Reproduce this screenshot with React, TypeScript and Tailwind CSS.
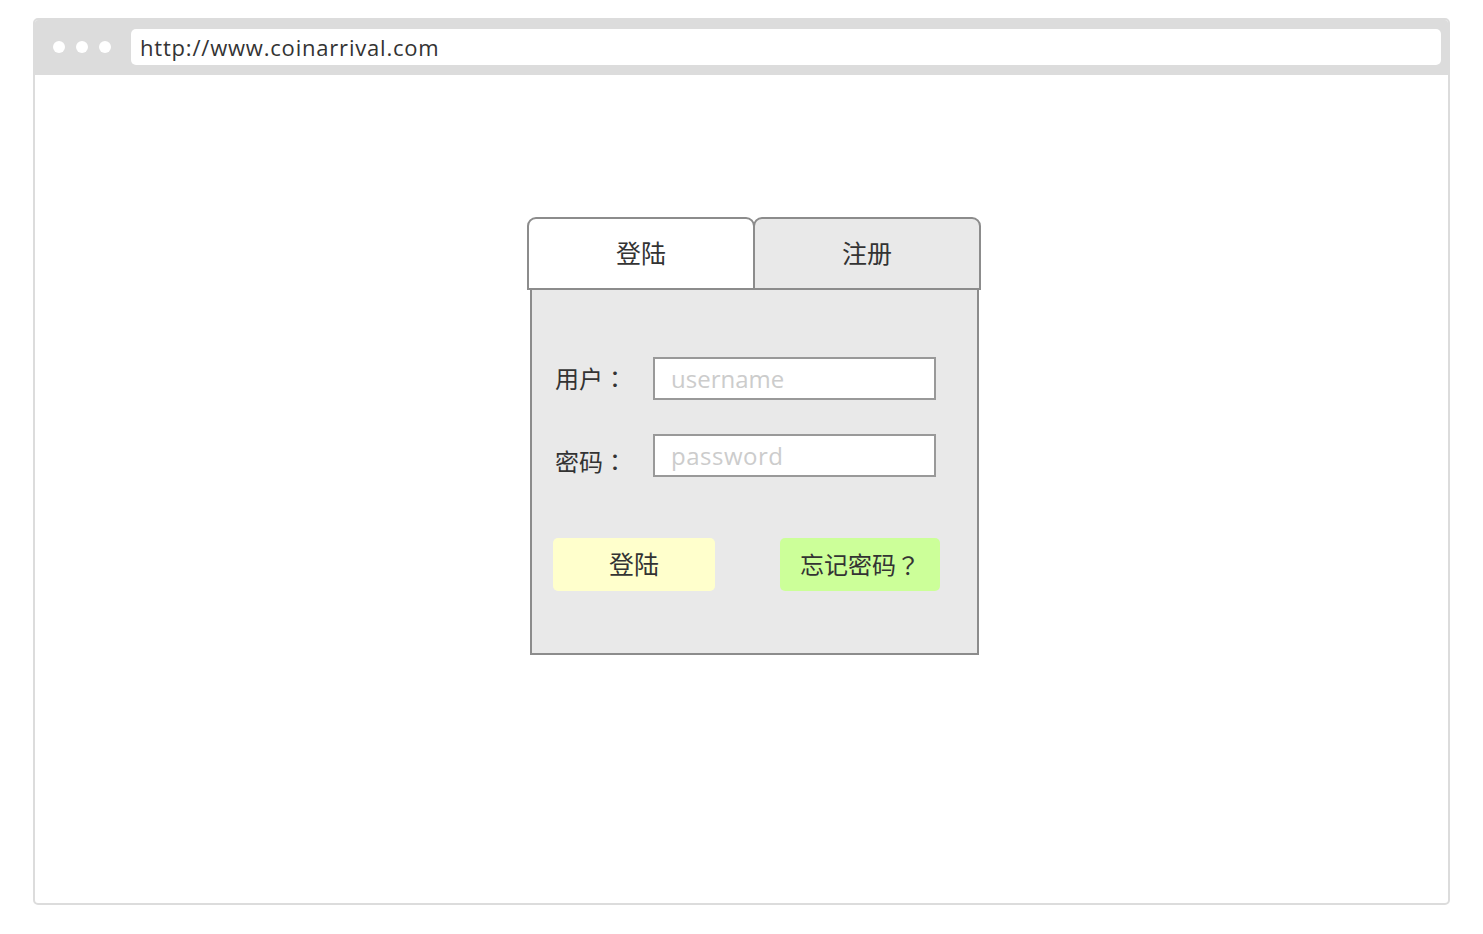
import React from 'react'

const font = { fontFamily: '"Open Sans", "Noto Sans CJK SC", sans-serif' }
const punct = { fontFamily: '"Noto Sans CJK TC", sans-serif' }

export default function App() {
  return (
    <div className="min-h-screen bg-white px-[33px] pt-[18px]" style={font}>
      <div className="h-[887px] w-[1417px] rounded-[5px] border-2 border-[#dcdcdc] bg-white flex flex-col overflow-hidden">
        {/* --- 浏览器地址栏 --- */}
        <div className="h-[55px] bg-[#dcdcdc] flex items-start pt-[9px] pr-[7px]">
          <div className="flex items-center gap-[11px] pl-[18px] h-[36px]">
            <span className="w-[12px] h-[12px] rounded-full bg-white" />
            <span className="w-[12px] h-[12px] rounded-full bg-white" />
            <span className="w-[12px] h-[12px] rounded-full bg-white" />
          </div>
          <div className="ml-[20px] flex-1 h-[36px] rounded-[5px] bg-white flex items-center pl-[9px] text-[22px] text-[#333] tracking-[0.8px]">
            http://www.coinarrival.com
          </div>
        </div>

        {/* --- 登录面板 --- */}
        <div className="pl-[492px] pt-[142px]">
          <div className="flex">
            <div className="w-[228px] h-[73px] rounded-t-[9px] border-2 border-[#8c8c8c] bg-white flex items-center justify-center text-[25px] text-[#333]">
              登陆
            </div>
            <div className="-ml-[2px] w-[228px] h-[73px] rounded-t-[9px] border-2 border-[#8c8c8c] bg-[#e9e9e9] flex items-center justify-center text-[25px] text-[#333]">
              注册
            </div>
          </div>
          <div className="ml-[3px] -mt-[2px] w-[449px] h-[367px] border-2 border-[#8c8c8c] bg-[#e9e9e9] pl-[23px] pt-[67px]">
            <div className="flex items-center">
              <span className="w-[98px] text-[24px] text-[#333]">
                用户<span style={punct}>：</span>
              </span>
              <div className="w-[283px] h-[43px] border-2 border-[#999] bg-white flex items-center pl-[16px] text-[24px] text-[#ccc]">
                username
              </div>
            </div>
            <div className="flex items-center mt-[34px]">
              <span className="w-[98px] text-[24px] text-[#333] translate-y-[6px]">
                密码<span style={punct}>：</span>
              </span>
              <div className="w-[283px] h-[43px] border-2 border-[#999] bg-white flex items-center pl-[16px] text-[24px] text-[#ccc] tracking-[0.5px]">
                password
              </div>
            </div>
            <div className="flex mt-[61px]">
              <div className="-ml-[2px] w-[162px] h-[53px] rounded-[5px] bg-[#ffffcc] flex items-center justify-center text-[25px] text-[#333]">
                登陆
              </div>
              <div className="ml-[65px] w-[160px] h-[53px] rounded-[5px] bg-[#ccff99] flex items-center justify-center text-[24px] text-[#333]">
                忘记密码<span style={punct}>？</span>
              </div>
            </div>
          </div>
        </div>
      </div>
    </div>
  )
}
